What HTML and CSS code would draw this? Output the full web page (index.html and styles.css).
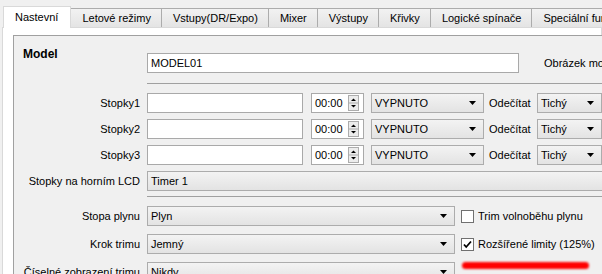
FILE: index.html
```html
<!DOCTYPE html>
<html lang="cs">
<head>
  <meta charset="UTF-8">
  <title>Nastavení modelu</title>
  <link rel="stylesheet" href="styles.css">
</head>
<body>
  <div class="tabs">
    <div class="tab active">Nastevní</div>
    <div class="tab">Letové režimy</div>
    <div class="tab">Vstupy(DR/Expo)</div>
    <div class="tab">Mixer</div>
    <div class="tab">Výstupy</div>
    <div class="tab">Křivky</div>
    <div class="tab">Logické spínače</div>
    <div class="tab">Speciální funkce</div>
  </div>

  <div class="pane">
    <div class="frame">
      <div class="row model-row">
        <div class="label model-label">Model</div>
        <div class="input model-input">MODEL01</div>
        <div class="side-label">Obrázek modelu</div>
      </div>

      <div class="sep"></div>

      <div class="row first">
        <div class="label">Stopky1</div>
        <div class="input name"></div>
        <div class="spin">
          <span>00:00</span>
          <svg class="spin-btns" width="11" height="16" viewBox="0 0 11 16">
            <rect x="0.5" y="0.5" width="10" height="15" fill="#ececec" stroke="#acacac"/>
            <line x1="1" y1="8" x2="10" y2="8" stroke="#acacac"/>
            <path d="M3 6 L8 6 L5.5 3.5 Z" fill="#000"/>
            <path d="M3 10 L8 10 L5.5 12.5 Z" fill="#000"/>
          </svg>
        </div>
        <div class="combo mode"><span>VYPNUTO</span><svg width="7" height="4" viewBox="0 0 7 4"><path d="M0 0 L7 0 L3.5 4 Z" fill="#000"/></svg></div>
        <div class="sub-label">Odečítat</div>
        <div class="combo sound"><span>Tichý</span><svg width="7" height="4" viewBox="0 0 7 4"><path d="M0 0 L7 0 L3.5 4 Z" fill="#000"/></svg></div>
      </div>

      <div class="row">
        <div class="label">Stopky2</div>
        <div class="input name"></div>
        <div class="spin">
          <span>00:00</span>
          <svg class="spin-btns" width="11" height="16" viewBox="0 0 11 16">
            <rect x="0.5" y="0.5" width="10" height="15" fill="#ececec" stroke="#acacac"/>
            <line x1="1" y1="8" x2="10" y2="8" stroke="#acacac"/>
            <path d="M3 6 L8 6 L5.5 3.5 Z" fill="#000"/>
            <path d="M3 10 L8 10 L5.5 12.5 Z" fill="#000"/>
          </svg>
        </div>
        <div class="combo mode"><span>VYPNUTO</span><svg width="7" height="4" viewBox="0 0 7 4"><path d="M0 0 L7 0 L3.5 4 Z" fill="#000"/></svg></div>
        <div class="sub-label">Odečítat</div>
        <div class="combo sound"><span>Tichý</span><svg width="7" height="4" viewBox="0 0 7 4"><path d="M0 0 L7 0 L3.5 4 Z" fill="#000"/></svg></div>
      </div>

      <div class="row">
        <div class="label">Stopky3</div>
        <div class="input name"></div>
        <div class="spin">
          <span>00:00</span>
          <svg class="spin-btns" width="11" height="16" viewBox="0 0 11 16">
            <rect x="0.5" y="0.5" width="10" height="15" fill="#ececec" stroke="#acacac"/>
            <line x1="1" y1="8" x2="10" y2="8" stroke="#acacac"/>
            <path d="M3 6 L8 6 L5.5 3.5 Z" fill="#000"/>
            <path d="M3 10 L8 10 L5.5 12.5 Z" fill="#000"/>
          </svg>
        </div>
        <div class="combo mode"><span>VYPNUTO</span><svg width="7" height="4" viewBox="0 0 7 4"><path d="M0 0 L7 0 L3.5 4 Z" fill="#000"/></svg></div>
        <div class="sub-label">Odečítat</div>
        <div class="combo sound"><span>Tichý</span><svg width="7" height="4" viewBox="0 0 7 4"><path d="M0 0 L7 0 L3.5 4 Z" fill="#000"/></svg></div>
      </div>

      <div class="row">
        <div class="label">Stopky na horním LCD</div>
        <div class="combo lcd"><span>Timer 1</span></div>
      </div>

      <div class="sep sep-low"></div>

      <div class="row first">
        <div class="label">Stopa plynu</div>
        <div class="combo wide"><span>Plyn</span><svg width="7" height="4" viewBox="0 0 7 4"><path d="M0 0 L7 0 L3.5 4 Z" fill="#000"/></svg></div>
        <div class="check">
          <svg width="13" height="13" viewBox="0 0 13 13"><rect x="0.5" y="0.5" width="12" height="12" fill="#fff" stroke="#707070"/></svg>
          <span>Trim volnoběhu plynu</span>
        </div>
      </div>

      <div class="row loose">
        <div class="label">Krok trimu</div>
        <div class="combo wide"><span>Jemný</span><svg width="7" height="4" viewBox="0 0 7 4"><path d="M0 0 L7 0 L3.5 4 Z" fill="#000"/></svg></div>
        <div class="check">
          <svg width="13" height="13" viewBox="0 0 13 13"><rect x="0.5" y="0.5" width="12" height="12" fill="#fff" stroke="#707070"/><path d="M3 6.5 L5.2 9 L10 3.5" fill="none" stroke="#000" stroke-width="1.8"/></svg>
          <span>Rozšířené limity (125%)</span>
          <div class="marker"></div>
        </div>
      </div>

      <div class="row loose">
        <div class="label">Číselné zobrazení trimu</div>
        <div class="combo wide"><span>Nikdy</span><svg width="7" height="4" viewBox="0 0 7 4"><path d="M0 0 L7 0 L3.5 4 Z" fill="#000"/></svg></div>
      </div>
    </div>
  </div>
</body>
</html>
```
FILE: styles.css
```css
body {
  margin: 0;
  width: 602px;
  height: 274px;
  overflow: hidden;
  background-color: #f0f0f0;
  color: #000;
  font-family: "Liberation Sans", Arial, sans-serif;
  font-size: 11px;
}

.tabs {
  display: flex;
  align-items: flex-end;
  height: 20px;
  padding: 7px 0 0 3px;
  white-space: nowrap;
}

.tab {
  height: 18px;
  line-height: 19px;
  padding: 0 10px 0 11px;
  margin-left: -1px;
  border: 1px solid #acacac;
  border-bottom: none;
  background: linear-gradient(#f2f2f2, #e4e4e4);
}

.tab.active {
  position: relative;
  z-index: 1;
  height: 21px;
  line-height: 21px;
  margin-left: 0;
  margin-bottom: -1px;
  padding: 0 12px 0 11px;
  background: #fff;
  border-color: #d9d9d9;
}

.pane {
  margin-left: 2px;
  padding: 7px 0 0 10px;
  height: 300px;
  background: #fff;
  border: 1px solid #d9d9d9;
}

.frame {
  width: 700px;
  height: 300px;
  padding-top: 17px;
  background: #f0f0f0;
  border-top: 1px solid #a0a0a0;
  border-left: 1px solid #a0a0a0;
  white-space: nowrap;
}

.row {
  display: flex;
  align-items: center;
  height: 20px;
  margin-top: 6px;
}

.row.first {
  margin-top: 9px;
}

.row.loose {
  margin-top: 8px;
}

.model-row {
  margin-top: 0;
}

.label {
  flex: none;
  width: 126px;
  margin-right: 7px;
  text-align: right;
}

.model-label {
  align-self: flex-start;
  margin-top: -6px;
  padding-left: 9px;
  box-sizing: border-box;
  text-align: left;
  font-size: 12px;
  font-weight: bold;
  line-height: 14px;
}

.input {
  flex: none;
  box-sizing: border-box;
  height: 20px;
  line-height: 18px;
  padding-left: 3px;
  background: #fff;
  border: 1px solid #a9a9a9;
}

.model-input {
  width: 372px;
  margin-right: 25px;
}

.name {
  width: 156px;
  margin-right: 8px;
}

.sep {
  margin: 10px 0 0 133px;
  border-top: 1px solid #a0a0a0;
}

.sep-low {
  margin-top: 5px;
}

.spin {
  flex: none;
  display: flex;
  align-items: center;
  justify-content: space-between;
  box-sizing: border-box;
  width: 53px;
  height: 20px;
  margin-right: 7px;
  padding: 0 4px 0 3px;
  background: #fff;
  border: 1px solid #a9a9a9;
}

.combo {
  flex: none;
  display: flex;
  align-items: center;
  justify-content: space-between;
  box-sizing: border-box;
  height: 20px;
  padding: 0 7px 0 3px;
  background: linear-gradient(#f3f3f3, #e3e3e3);
  border: 1px solid #acacac;
}

.mode {
  width: 113px;
  margin-right: 5px;
}

.sub-label {
  flex: none;
  width: 42px;
  margin-right: 6px;
}

.sound {
  width: 65px;
}

.lcd {
  width: 520px;
}

.wide {
  width: 308px;
  margin-right: 6px;
}

.check {
  position: relative;
  display: flex;
  align-items: center;
  gap: 4px;
}

.check svg {
  flex: none;
}

.marker {
  position: absolute;
  left: 1px;
  top: 24px;
  width: 127px;
  height: 7px;
  border-radius: 4px;
  background: #ff0000;
  filter: blur(1.2px);
}
```
